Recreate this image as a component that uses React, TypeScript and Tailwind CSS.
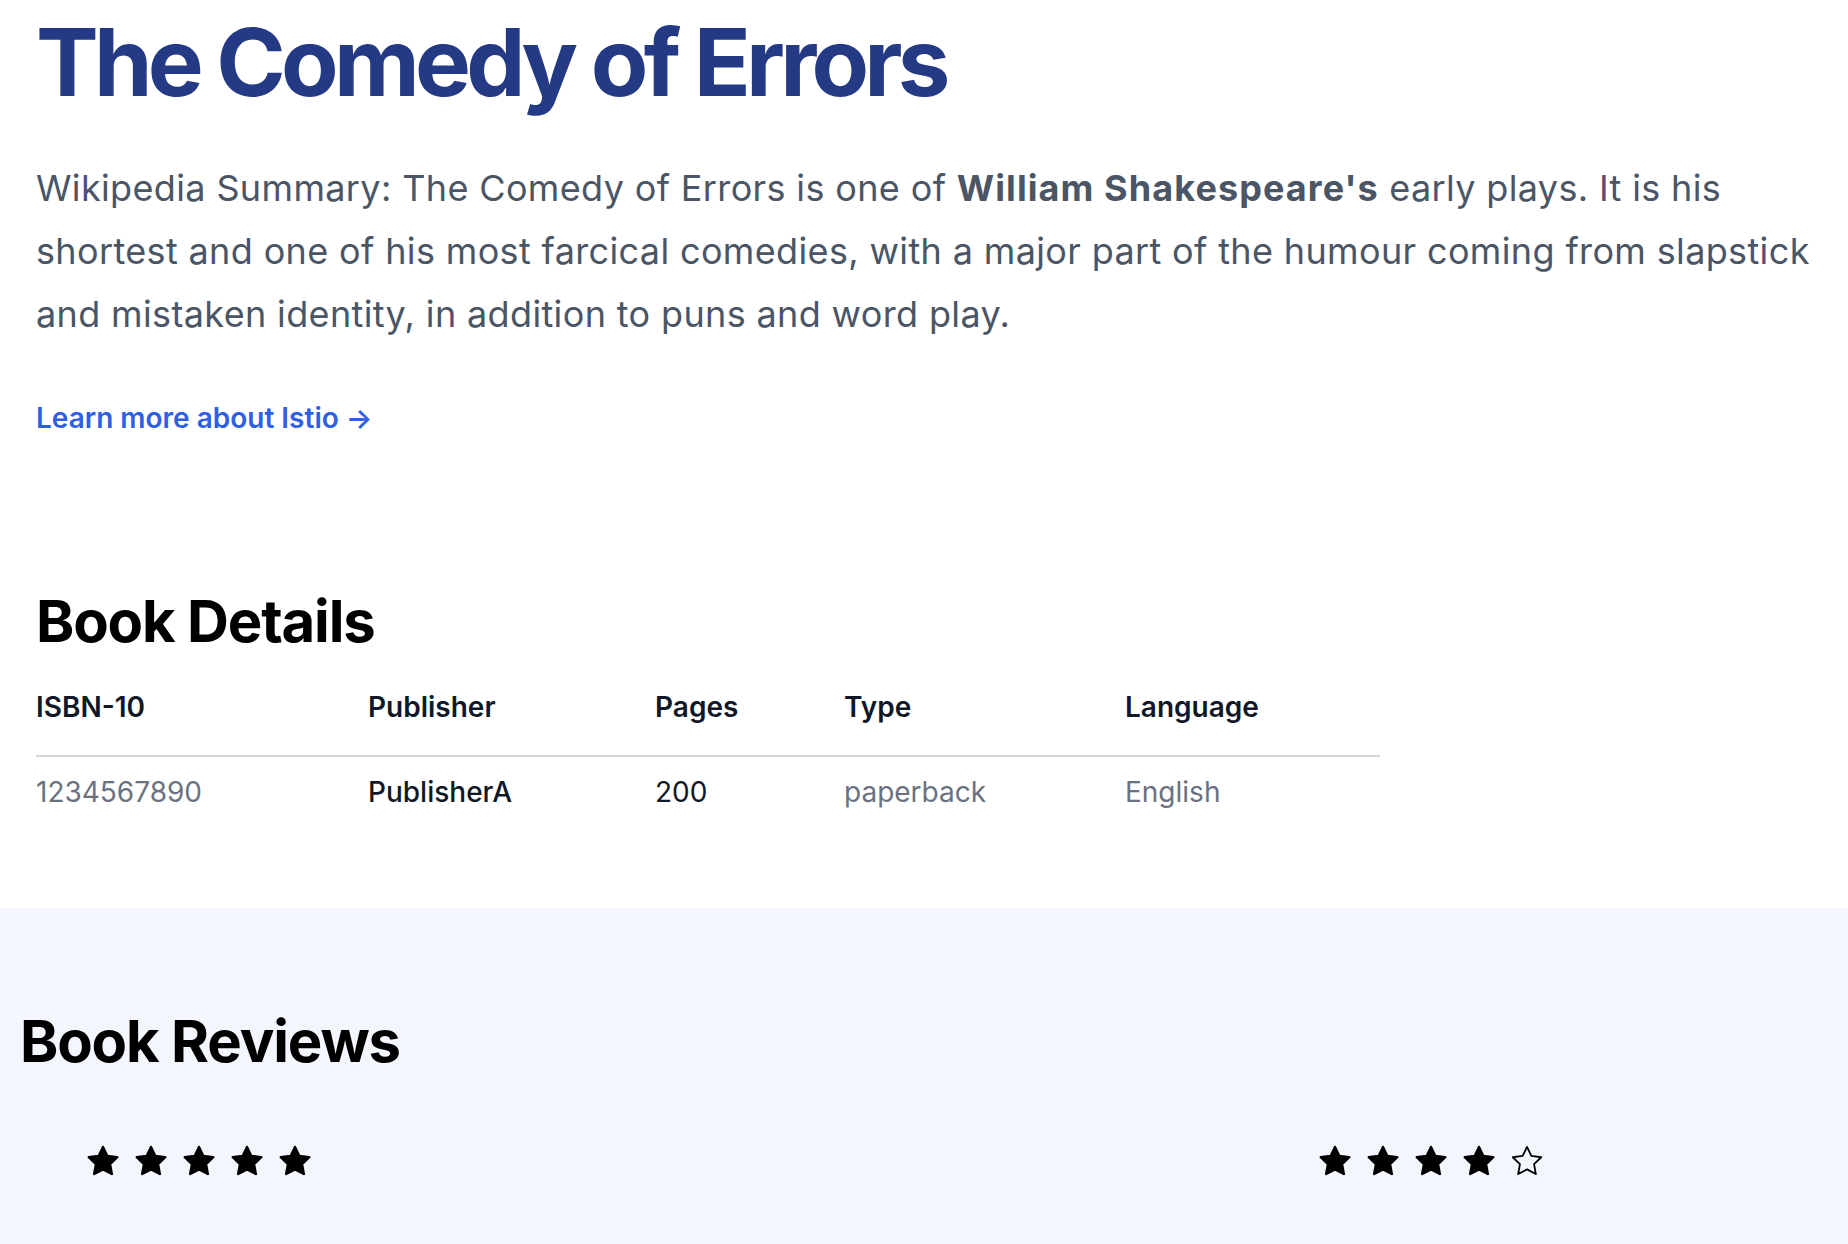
import React from 'react';

const details = [
  { label: 'ISBN-10', value: '1234567890', w: 'w-[332px]', cls: 'text-gray-500' },
  { label: 'Publisher', value: 'PublisherA', w: 'w-[287px]', cls: 'font-medium text-gray-900' },
  { label: 'Pages', value: '200', w: 'w-[189px]', cls: 'text-gray-900' },
  { label: 'Type', value: 'paperback', w: 'w-[281px]', cls: 'text-gray-500' },
  { label: 'Language', value: 'English', w: 'w-[255px]', cls: 'text-gray-500' },
];

const Star = ({ filled }: { filled: boolean }) => (
  <svg viewBox="0 0 24 24" className="h-[36px] w-[36px]">
    <path
      d="M12 2.6l2.9 6 6.6.9-4.8 4.6 1.2 6.6L12 17.6l-5.9 3.1 1.2-6.6-4.8-4.6 6.6-.9z"
      fill={filled ? 'currentColor' : 'none'}
      stroke="currentColor"
      strokeWidth={filled ? 1.6 : 1.2}
      strokeLinejoin="round"
    />
  </svg>
);

const Stars = ({ count }: { count: number }) => (
  <div className="flex gap-[12px] text-black">
    {[0, 1, 2, 3, 4].map((i) => (
      <Star key={i} filled={i < count} />
    ))}
  </div>
);

export default function App() {
  return (
    <div className="min-h-screen w-full bg-white font-['Inter','Noto_Sans',sans-serif]">
      <div className="px-[36px] pt-[15px]">
        <h1 className="text-[94px] font-bold leading-[95px] tracking-[-0.051em] text-[#243a84]">
          The Comedy of Errors
        </h1>
        <p className="mt-[47px] text-[36px] leading-[63px] tracking-[0.01em] text-gray-600">
          Wikipedia Summary: The Comedy of Errors is one of{' '}
          <strong className="font-bold tracking-[0.03em]">William Shakespeare's</strong> early plays. It is his
          shortest and one of his most farcical comedies, with a major part of the humour coming from slapstick
          and mistaken identity, in addition to puns and word play.
        </p>
        <a href="#" className="mt-[52px] block text-[28px] font-semibold leading-[40px] text-[#2f5fe3]">
          Learn more about Istio <span aria-hidden="true">&rarr;</span>
        </a>

        <h2 className="mt-[147px] text-[58px] font-bold leading-[72px] tracking-[-0.02em] text-black">
          Book Details
        </h2>
        <table className="mt-[2px] w-[1344px] table-fixed text-left text-[28px] leading-[40px]">
          <thead className="border-b-2 border-gray-300">
            <tr>
              {details.map((d) => (
                <th key={d.label} className={`${d.w} pt-[28px] pb-[28px] font-semibold text-gray-900`}>
                  {d.label}
                </th>
              ))}
            </tr>
          </thead>
          <tbody>
            <tr>
              {details.map((d) => (
                <td key={d.label} className={`py-[15px] ${d.cls}`}>
                  {d.value}
                </td>
              ))}
            </tr>
          </tbody>
        </table>
      </div>

      <div className="mt-[81px] bg-[#f3f6fd] pb-[80px]">
        <h2 className="px-[20px] pt-[97px] text-[58px] font-bold leading-[72px] tracking-[-0.02em] text-black">
          Book Reviews
        </h2>
        <div className="mt-[66px] grid grid-cols-3">
          <div className="pl-[85px]">
            <Stars count={5} />
          </div>
          <div />
          <div className="pl-[85px]">
            <Stars count={4} />
          </div>
        </div>
      </div>
    </div>
  );
}
